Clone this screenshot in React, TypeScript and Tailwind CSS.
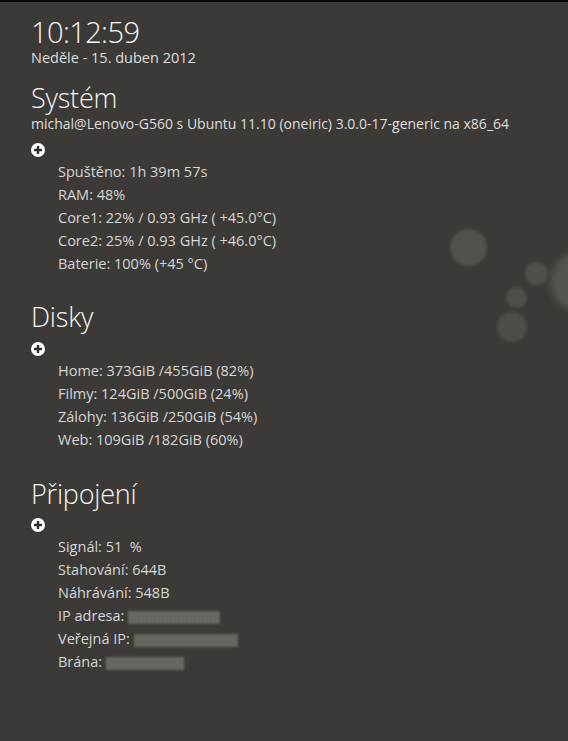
import React from "react";

const font = { fontFamily: '"Open Sans", "Noto Sans", sans-serif' };

function Plus() {
  return (
    <svg width="14" height="14" viewBox="0 0 14 14" className="block">
      <circle cx="7" cy="7" r="7" fill="#ffffff" />
      <rect x="3" y="5.8" width="8" height="2.4" fill="#2f2e2b" />
      <rect x="5.8" y="3" width="2.4" height="8" fill="#2f2e2b" />
    </svg>
  );
}

function Redacted({ w }: { w: string }) {
  return (
    <span
      className={`inline-block align-middle h-[13px] ${w} bg-[repeating-linear-gradient(90deg,#6c6b66_0px,#6c6b66_2px,#62615c_2px,#62615c_4px)] blur-[0.8px]`}
    />
  );
}

function Section({
  title,
  sub,
  items,
  top,
  iconTop,
}: {
  title: string;
  sub?: string;
  items: React.ReactNode[];
  top: string;
  iconTop: string;
}) {
  return (
    <div className={top}>
      <div className="text-[27px] leading-[34px] font-light tracking-[-0.2px] text-[#f4f4f4]">{title}</div>
      {sub && <div className="text-[14px] leading-[18px] text-[#dedede]">{sub}</div>}
      <div className={iconTop}>
        <Plus />
      </div>
      <div className="mt-[3px] pl-[27px] flex flex-col">
        {items.map((it, i) => (
          <div key={i} className="text-[14.5px] leading-[23px] text-[#d6d6d6] whitespace-pre">
            {it}
          </div>
        ))}
      </div>
    </div>
  );
}

export default function App() {
  return (
    <div
      className="relative w-[568px] h-[741px] overflow-hidden bg-[#3b3a36] border-t-[2px] border-[#0a0a0a]"
      style={font}
    >
      <div className="absolute inset-0 pointer-events-none">
        <div className="absolute left-[450px] top-[227px] w-[37px] h-[37px] rounded-full bg-[#52514c] blur-[1.5px]" />
        <div className="absolute left-[525px] top-[260px] w-[23px] h-[23px] rounded-full bg-[#504f4a] blur-[1.5px]" />
        <div className="absolute left-[550px] top-[251px] w-[58px] h-[58px] rounded-full bg-[#55544f] blur-[3px]" />
        <div className="absolute left-[506px] top-[285px] w-[21px] h-[21px] rounded-full bg-[#4f4e49] blur-[1.5px]" />
        <div className="absolute left-[497px] top-[310px] w-[30px] h-[30px] rounded-full bg-[#4e4d48] blur-[1.5px]" />
      </div>

      <div className="relative flex flex-col pl-[31px] pt-[14px]">
        <div className="text-[29px] leading-[32px] font-light tracking-[-0.6px] text-[#f6f6f6]">10:12:59</div>
        <div className="mt-[2px] text-[14.5px] leading-[16px] text-[#dedede]">Neděle - 15. duben 2012</div>

        <Section
          top="mt-[15px]"
          iconTop="mt-[10px]"
          title="Systém"
          sub="michal@Lenovo-G560 s Ubuntu 11.10 (oneiric) 3.0.0-17-generic na x86_64"
          items={[
            "Spuštěno: 1h 39m 57s",
            "RAM: 48%",
            "Core1: 22% / 0.93 GHz ( +45.0°C)",
            "Core2: 25% / 0.93 GHz ( +46.0°C)",
            "Baterie: 100% (+45 °C)",
          ]}
        />

        <Section
          top="mt-[25px]"
          iconTop="mt-[8px]"
          title="Disky"
          items={[
            "Home: 373GiB /455GiB (82%)",
            "Filmy: 124GiB /500GiB (24%)",
            "Zálohy: 136GiB /250GiB (54%)",
            "Web: 109GiB /182GiB (60%)",
          ]}
        />

        <Section
          top="mt-[26px]"
          iconTop="mt-[7px]"
          title="Připojení"
          items={[
            "Signál: 51  %",
            "Stahování: 644B",
            "Náhrávání: 548B",
            <span key="ip">
              IP adresa: <Redacted w="w-[92px]" />
            </span>,
            <span key="vip">
              Veřejná IP: <Redacted w="w-[104px]" />
            </span>,
            <span key="br">
              Brána: <Redacted w="w-[78px]" />
            </span>,
          ]}
        />
      </div>
    </div>
  );
}
